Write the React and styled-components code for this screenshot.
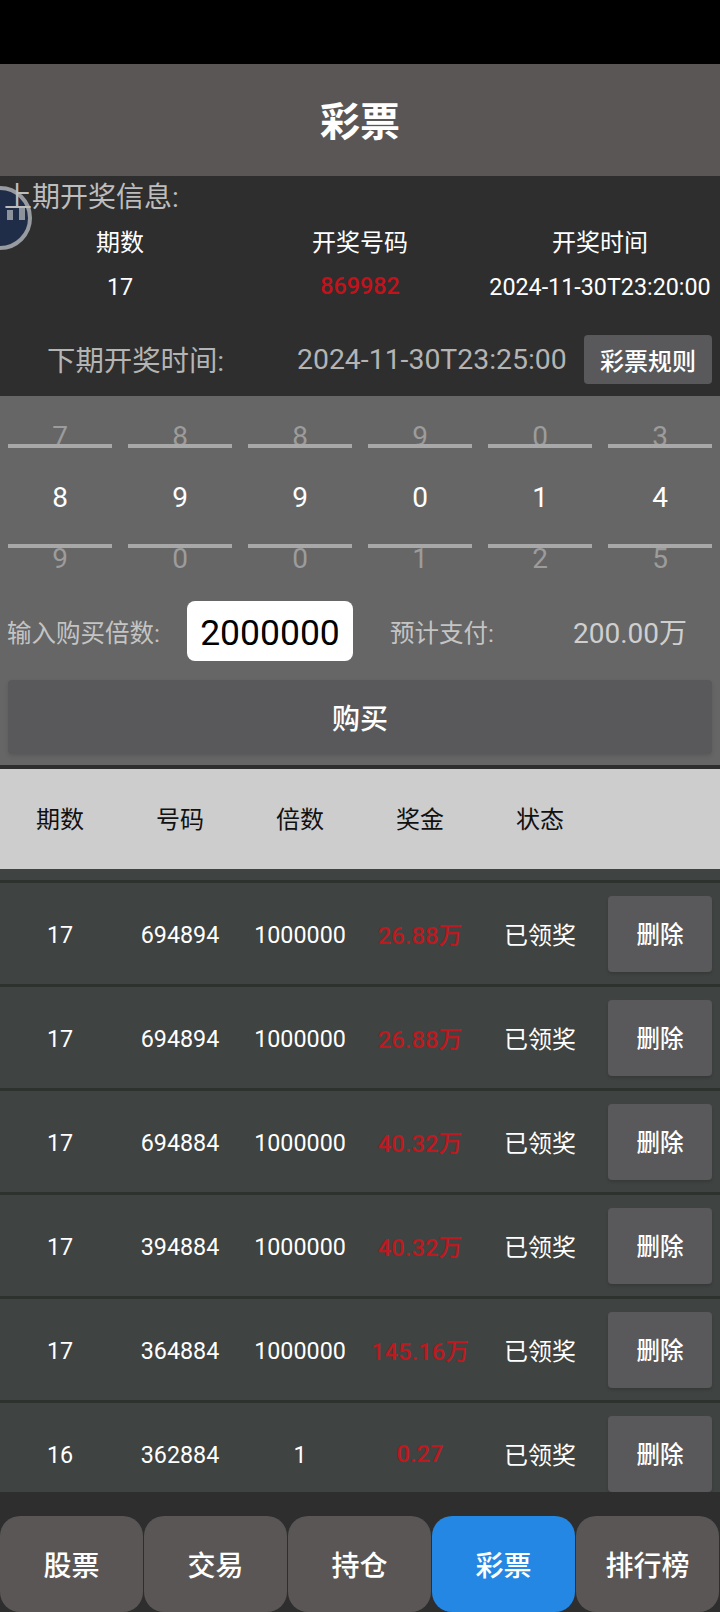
import React from "react";
import styled, { createGlobalStyle } from "styled-components";

const Global = createGlobalStyle`
  html, body { margin: 0; padding: 0; background: #2e2e2e; }
  * { box-sizing: border-box; }
  body { font-family: Roboto, "Noto Sans CJK SC", sans-serif; }
`;

const Page = styled.div`
  position: relative;
  width: 720px;
  height: 1612px;
  overflow: hidden;
  display: flex;
  flex-direction: column;
  background: #2e2e2e;
`;
const StatusBar = styled.div`
  height: 64px;
  background: #000;
`;
const Header = styled.div`
  height: 112px;
  padding-bottom: 2px;
  background: #5a5655;
  color: #fff;
  font-size: 40px;
  font-weight: 700;
  display: flex;
  align-items: center;
  justify-content: center;
`;

// info del ultimo sorteo
const Info = styled.section`
  height: 220px;
  background: #2e2e2e;
  display: flex;
  flex-direction: column;
`;
const InfoTitle = styled.div`
  position: relative;
  z-index: 1;
  height: 42px;
  padding-left: 4px;
  padding-top: 1px;
  font-size: 28px;
  line-height: 42px;
  color: #bdbdbd;
`;
const InfoRow = styled.div`
  display: grid;
  grid-template-columns: repeat(3, 240px);
  height: ${(p) => p.$h}px;
  align-items: center;
  justify-items: center;
  font-size: 24px;
  color: #fff;
`;
const InfoHead = styled(InfoRow)`
  padding-bottom: 2px;
`;
const Num = styled.span`
  margin-top: 2px;
  font-size: 23.3px;
`;
const Red = styled(Num)`
  margin-top: 0;
  font-weight: 500;
  color: #c4121c;
`;
const NextRow = styled.div`
  margin-top: 27px;
  display: flex;
  align-items: center;
  height: 49px;
  padding-left: 47px;
  padding-right: 8px;
  color: #b4b4b4;
  font-size: 28.4px;
`;
const NextLabel = styled.span`
  width: 250px;
  margin-bottom: 3px;
`;
const NextTime = styled.span`
  flex: 1;
`;
const RuleButton = styled.div`
  width: 128px;
  height: 49px;
  background: #59595b;
  border-radius: 4px;
  color: #fff;
  font-size: 24px;
  font-weight: 500;
  display: flex;
  align-items: center;
  justify-content: center;
`;
const FloatBall = styled.div`
  position: absolute;
  left: -32px;
  top: 186px;
  width: 64px;
  height: 64px;
  border-radius: 50%;
  background: #1f2d48;
  border: 4px solid #989ca1;
`;
const BallEye = styled.i`
  position: absolute;
  left: ${(p) => p.$x}px;
  top: ${(p) => p.$y}px;
  width: 6px;
  height: ${(p) => p.$h}px;
  background: #8d939b;
`;

// selector de numeros
const Buy = styled.section`
  height: 369px;
  background: #666;
  display: flex;
  flex-direction: column;
`;
const Picker = styled.div`
  display: grid;
  grid-template-columns: repeat(6, 120px);
  margin-top: 27px;
`;
const Wheel = styled.div`
  position: relative;
  height: 147px;
  display: flex;
  flex-direction: column;
  align-items: center;
`;
const WheelLine = styled.div`
  position: absolute;
  left: 8px;
  right: 8px;
  top: ${(p) => p.$top}px;
  height: 4px;
  background: #a8a8a8;
`;
const Digit = styled.div`
  height: ${(p) => p.$h}px;
  line-height: ${(p) => p.$h}px;
  font-size: 28px;
  color: ${(p) => (p.$on ? "#fff" : "#9c9c9c")};
`;
const InputRow = styled.div`
  margin-top: 31px;
  display: flex;
  align-items: center;
  height: 60px;
  padding-left: 7px;
`;
const InputLabel = styled.span`
  width: 180px;
  font-size: 24.5px;
  color: #c4c4c4;
`;
const Amount = styled.div`
  width: 166px;
  height: 60px;
  padding-top: 4px;
  background: #fff;
  border-radius: 8px;
  color: #000;
  font-size: 35.5px;
  display: flex;
  align-items: center;
  justify-content: center;
`;
const PayLabel = styled.span`
  margin-left: 37px;
  width: 183px;
  font-size: 24.5px;
  color: #c4c4c4;
`;
const PayValue = styled.span`
  font-size: 28px;
  color: #cfcfcf;
`;
const BuyButton = styled.div`
  margin: 19px 8px 0;
  height: 74px;
  background: #59595b;
  border-radius: 4px;
  color: #fff;
  font-size: 28px;
  font-weight: 500;
  display: flex;
  align-items: center;
  justify-content: center;
  box-shadow: 0 2px 4px rgba(0, 0, 0, 0.12);
`;
const Divider = styled.div`
  height: 4px;
  background: #2e2e2e;
`;

// tabla de apuestas
const TableHead = styled.div`
  height: 100px;
  padding-bottom: 4px;
  background: #cdcdcd;
  display: grid;
  grid-template-columns: repeat(6, 120px);
  align-items: center;
  justify-items: center;
  font-size: 24px;
  color: #111;
`;
const List = styled.div`
  height: 623px;
  overflow: hidden;
  background: #3f4341;
  padding-top: 11px;
`;
const Row = styled.div`
  height: 104px;
  background: #3f4341;
  border-top: 3px solid #2e322f;
  display: grid;
  grid-template-columns: repeat(6, 120px);
  align-items: center;
  justify-items: center;
  font-size: 24px;
  color: #fff;
`;
const Prize = styled(Num)`
  margin-top: 0;
  font-size: 23.8px;
  font-weight: 500;
  color: #bc1a20;
`;
const DeleteButton = styled.div`
  width: 104px;
  height: 76px;
  padding-bottom: 2px;
  background: #59595b;
  border-radius: 4px;
  font-size: 23.5px;
  font-weight: 500;
  display: flex;
  align-items: center;
  justify-content: center;
  box-shadow: 0 2px 3px rgba(0, 0, 0, 0.15);
`;

const Nav = styled.nav`
  margin-top: 24px;
  height: 96px;
  display: grid;
  grid-template-columns: repeat(5, 144px);
`;
const NavItem = styled.div`
  margin-right: 1px;
  background: ${(p) => (p.$active ? "#2387e3" : "#5a5655")};
  border-radius: 20px;
  color: #fff;
  font-size: 28px;
  font-weight: 500;
  display: flex;
  align-items: center;
  justify-content: center;
`;

const wheels = [
  [7, 8, 9],
  [8, 9, 0],
  [8, 9, 0],
  [9, 0, 1],
  [0, 1, 2],
  [3, 4, 5],
];
const rows = [
  ["17", "694894", "1000000", "26.88万"],
  ["17", "694894", "1000000", "26.88万"],
  ["17", "694884", "1000000", "40.32万"],
  ["17", "394884", "1000000", "40.32万"],
  ["17", "364884", "1000000", "145.16万"],
  ["16", "362884", "1", "0.27"],
];

export default function App() {
  return (
    <Page>
      <Global />
      <StatusBar />
      <Header>彩票</Header>
      <Info>
        <InfoTitle>上期开奖信息:</InfoTitle>
        <InfoHead $h={46}>
          <span>期数</span>
          <span>开奖号码</span>
          <span>开奖时间</span>
        </InfoHead>
        <InfoRow $h={44}>
          <Num>17</Num>
          <Red>869982</Red>
          <Num>2024-11-30T23:20:00</Num>
        </InfoRow>
        <NextRow>
          <NextLabel>下期开奖时间:</NextLabel>
          <NextTime>2024-11-30T23:25:00</NextTime>
          <RuleButton>彩票规则</RuleButton>
        </NextRow>
      </Info>
      <FloatBall>
        <BallEye $x={35} $y={20} $h={10} />
        <BallEye $x={47} $y={18} $h={12} />
      </FloatBall>
      <Buy>
        <Picker>
          {wheels.map((w, i) => (
            <Wheel key={i}>
              <Digit $h={28}>{w[0]}</Digit>
              <Digit $h={94} $on>{w[1]}</Digit>
              <Digit $h={28}>{w[2]}</Digit>
              <WheelLine $top={21} />
              <WheelLine $top={121} />
            </Wheel>
          ))}
        </Picker>
        <InputRow>
          <InputLabel>输入购买倍数:</InputLabel>
          <Amount>2000000</Amount>
          <PayLabel>预计支付:</PayLabel>
          <PayValue>200.00万</PayValue>
        </InputRow>
        <BuyButton>购买</BuyButton>
      </Buy>
      <Divider />
      <TableHead>
        <span>期数</span>
        <span>号码</span>
        <span>倍数</span>
        <span>奖金</span>
        <span>状态</span>
      </TableHead>
      <List>
        {rows.map((r, i) => (
          <Row key={i}>
            <Num>{r[0]}</Num>
            <Num>{r[1]}</Num>
            <Num>{r[2]}</Num>
            <Prize>{r[3]}</Prize>
            <span>已领奖</span>
            <DeleteButton>删除</DeleteButton>
          </Row>
        ))}
      </List>
      <Nav>
        <NavItem>股票</NavItem>
        <NavItem>交易</NavItem>
        <NavItem>持仓</NavItem>
        <NavItem $active>彩票</NavItem>
        <NavItem>排行榜</NavItem>
      </Nav>
    </Page>
  );
}
